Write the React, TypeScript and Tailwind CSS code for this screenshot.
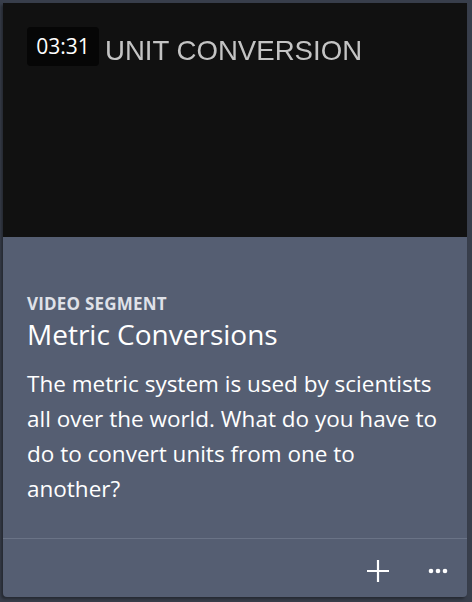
import React from "react";

export default function App() {
  return (
    <div className="w-[472px] h-[602px] bg-[#383e4b] pt-[3px] pl-[3px] pr-[5px] pb-[5px]">
      <div
        className="w-[464px] h-[594px] bg-[#555e72] rounded-b-[4px] overflow-hidden flex flex-col shadow-[-2px_2px_3px_rgba(0,0,0,0.35)]"
        style={{ fontFamily: "'Open Sans', sans-serif" }}
      >
        <div className="relative h-[234px] bg-[#111111] shrink-0">
          <div
            className="absolute left-[102px] top-[34px] text-[27.6px] leading-none text-[#c4c4c4] blur-[0.6px]"
            style={{ fontFamily: "'Liberation Sans', Arial, sans-serif" }}
          >
            UNIT CONVERSION
          </div>
          <div className="absolute left-[24px] top-[24px] w-[72px] h-[39px] rounded-[4px] bg-[#060606] flex items-center justify-center text-white text-[21px] leading-none">
            03:31
          </div>
        </div>
        <div className="flex-1 px-[24px] pt-[57px]">
          <div className="text-[17px] leading-[20px] font-bold text-[#dfe1e8] tracking-[0.2px]">
            VIDEO SEGMENT
          </div>
          <div className="text-[28px] leading-[34px] text-white mt-[3px]">
            Metric Conversions
          </div>
          <p className="text-[22.5px] leading-[35px] text-white mt-[15px] w-[416px]">
            The metric system is used by scientists all over the world. What do you have to do to convert units from one to another?
          </p>
        </div>
        <div className="h-[59px] border-t border-[#6a7386] flex items-center justify-end pr-[19px] gap-[38px] shrink-0">
          <svg width="24" height="24" viewBox="0 0 24 24" className="mt-[6px]">
            <path d="M12 1v22M1 12h22" stroke="white" strokeWidth="2.2" />
          </svg>
          <svg width="20" height="6" viewBox="0 0 20 6" className="mt-[6px]">
            <circle cx="3" cy="3" r="2.3" fill="white" />
            <circle cx="10" cy="3" r="2.3" fill="white" />
            <circle cx="17" cy="3" r="2.3" fill="white" />
          </svg>
        </div>
      </div>
    </div>
  );
}
